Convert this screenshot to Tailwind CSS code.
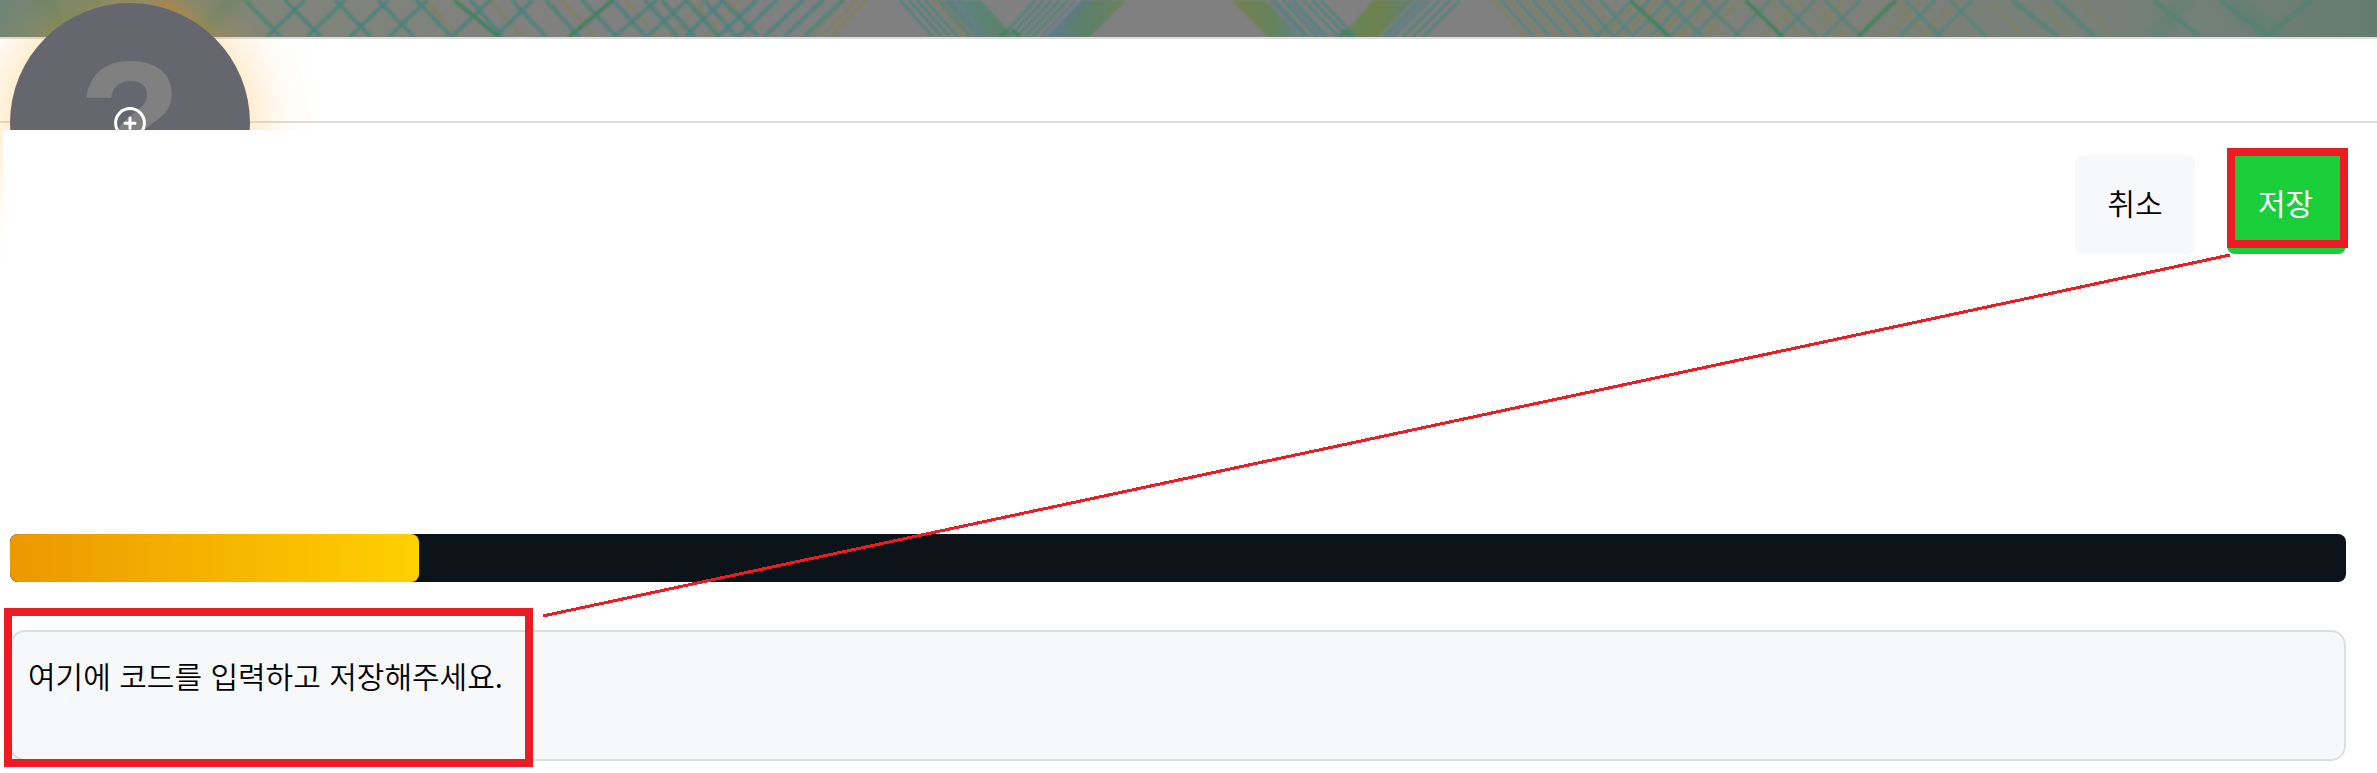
<!DOCTYPE html>
<html lang="ko">
<head>
<meta charset="utf-8">
<title>프로필 편집</title>
<script src="https://cdn.jsdelivr.net/npm/@tailwindcss/browser@4"></script>
</head>
<body class="bg-white">
<main class="relative flex h-[773px] w-[2377px] flex-col overflow-hidden bg-white font-['Noto_Sans_CJK_KR',sans-serif] text-[30px] text-black">
  <!-- Profile banner -->
  <header class="h-[39px] shrink-0 border-b-2 border-[#dedede] bg-[#808080]">
    <svg class="block h-[37px] w-full" viewBox="0 0 2377 37" fill="none">
      <defs>
        <filter id="soft" x="0" y="0" width="2377" height="37" filterUnits="userSpaceOnUse" color-interpolation-filters="sRGB"><feGaussianBlur stdDeviation="1.1"/></filter>
        <filter id="haze" x="-50" y="-50" width="2500" height="140" filterUnits="userSpaceOnUse" color-interpolation-filters="sRGB"><feGaussianBlur stdDeviation="7"/></filter>
        <linearGradient id="left"><stop stop-color="#6f8577"/><stop offset=".5" stop-color="#80857a"/><stop offset="1" stop-color="#808080"/></linearGradient>
        <linearGradient id="right"><stop stop-color="#808080"/><stop offset=".4" stop-color="#7d8078"/><stop offset=".8" stop-color="#74807a"/><stop offset="1" stop-color="#647c70"/></linearGradient>
        <linearGradient id="g1"><stop stop-color="#5c8387"/><stop offset="1" stop-color="#5d8262"/></linearGradient>
        <linearGradient id="g2"><stop stop-color="#5e7e89"/><stop offset=".5" stop-color="#5c8068"/><stop offset="1" stop-color="#6f8062"/></linearGradient>
        <linearGradient id="g3"><stop stop-color="#78804f"/><stop offset=".6" stop-color="#64825d"/><stop offset="1" stop-color="#648283"/></linearGradient>
        <linearGradient id="g4"><stop stop-color="#64855c"/><stop offset=".5" stop-color="#6d824f"/><stop offset="1" stop-color="#608078"/></linearGradient>
      </defs>
      <path d="M0 0h560v37H0z" fill="url(#left)"/>
      <path d="M1500 0h877v37h-877z" fill="url(#right)"/>
      <g filter="url(#haze)">
        <path d="M40 -5l35 47M95 -5l-45 47M235 -5l-42 47" stroke="#618365" stroke-width="10"/>
        <path d="M2190 -5l-40 47M2230 -5l50 47" stroke="#5b8073" stroke-width="9"/>
        <path d="M160 0l45 42" stroke="#a17d4d" stroke-width="14"/>
      </g>
      <g filter="url(#soft)">
        <!-- Broad ribbons -->
        <path d="M955 0h26l33 37h-28z" fill="url(#g1)"/>
        <path d="M1083 0h44l-37 37h-44z" fill="url(#g2)"/>
        <path d="M1231 0h34l36 37h-33z" fill="url(#g3)"/>
        <path d="M1373 0h42l-37 37h-36z" fill="url(#g4)"/>
        <!-- Woven threads -->
        <g stroke="#7f8064" stroke-width="3">
          <path d="M425 0l33 37M490 0l33 37M562 0l33 37M625 0l33 37M660 0l33 37M690 0l33 37M725 0l33 37"/>
          <path d="M857 0l-36 37M867 0l-36 37M845 0l-36 37M705 0l-36 37M740 0l-36 37"/>
          <path d="M933 0l33 37M942 0l33 37M1493 0l33 37M1509 0l33 37M1525 0l33 37M1541 0l33 37M1557 0l33 37M1573 0l33 37M1590 0l33 37"/>
          <path d="M1640 0l-36 37M1658 0l-36 37M1676 0l-36 37M1694 0l-36 37M1714 0l-36 37M1740 0l-36 37M1800 0l-36 37M1845 0l-36 37M1920 0l-36 37M1958 0l-36 37"/>
          <path d="M1690 0l33 37M1768 0l33 37M1812 0l33 37M1895 0l33 37M1990 0l33 37M2038 0l33 37M2080 0l33 37"/>
        </g>
        <g stroke="#46827c" stroke-opacity=".85" stroke-width="3.6">
          <path d="M245 0l36 37M285 0l36 37M335 0l36 37M378 0l36 37M416 0l36 37M470 0l33 37M512 0l34 37M546 0l33 37M582 0l35 37M613 0l33 37M645 0l33 37M662 0l33 37M686 0l33 37M704 0l33 37M722 0l37 37"/>
          <path d="M305 0l-38 37M345 0l-38 37M388 0l-38 37M427 0l-38 37M490 0l-38 37M533 0l-38 37M657 0l-43 37M687 0l-40 37M723 0l-38 37"/>
          <path d="M757 0l-39 37M777 0l-39 37M803 0l-39 37M823 0l-39 37M843 0l-39 37"/>
        </g>
        <g stroke="#4a8476" stroke-width="2.2">
          <path d="M900 0l33 37M909 0l33 37M917 0l33 37M925 0l33 37M938 0l33 37M948 0l33 37M1274 0l34 37M1283 0l34 37M1293 0l34 37M1303 0l36 37M1312 0l36 37M1320 0l36 37"/>
          <path d="M1036 0l-35 37M1044 0l-35 37M1052 0l-35 37M1060 0l-35 37M1068 0l-35 37M1420 0l-37 37M1430 0l-37 37M1440 0l-37 37M1450 0l-37 37M1460 0l-37 37"/>
        </g>
        <g stroke="#5c7891" stroke-width="2" stroke-opacity=".85"><path d="M952 0l33 37M944 0l33 37M1076 0l-35 37M1083 0l-35 37M1090 0l-35 37M1270 0l34 37M1288 0l34 37M1425 0l-37 37"/></g>
        <g stroke="#50837d" stroke-width="3.2" stroke-opacity=".78">
          <path d="M1501 0l33 37M1517 0l33 37M1533 0l33 37M1549 0l33 37M1565 0l33 37M1581 0l33 37M1600 0l33 37M1630 0l38 37M1665 0l38 37M1702 0l38 37M1780 0l36 37M1825 0l36 37M1905 0l36 37M1950 0l36 37"/>
          <path d="M1632 0l-36 37M1650 0l-36 37M1668 0l-36 37M1686 0l-36 37M1706 0l-36 37M1728 0l-36 37M1770 0l-36 37M1815 0l-36 37M1860 0l-36 37M1935 0l-36 37M1972 0l-36 37"/>
        </g>
        <path d="M454 0l45 37M613 0l-44 37M1630 0l40 37M1745 0l38 37M1896 0l-38 37M1008 30l-8 7M1012 30l8 7M1344 30l8 7M1346 30l-6 7" stroke="#42815e" stroke-width="3.6"/>
        <path d="M2012 0l46 37M2055 0l40 37M2153 0l47 37M2310 0l-42 37M2220 0l48 37" stroke="#538276" stroke-width="5" stroke-opacity=".75"/>
      </g>
    </svg>
  </header>

  <!-- Avatar strip, cut off by the editing panel below -->
  <section class="relative h-[91px] shrink-0">
    <div class="h-[84px] border-b-2 border-[#dedede]"></div>
    <div class="absolute top-[-36px] left-[10px] flex size-[240px] items-center justify-center rounded-full bg-[#66666e] shadow-[0_0_64px_rgba(255,165,20,0.44)]">
      <span class="relative -top-[3px] font-['Liberation_Sans',sans-serif] text-[164px] leading-none font-bold text-[#808080] [-webkit-text-stroke:2px_#808080]">?</span>
      <svg class="absolute top-[103px] left-[103px] size-[34px]" viewBox="0 0 34 34" fill="none" stroke="#fff" stroke-width="3" stroke-linecap="round">
        <circle cx="17" cy="17" r="14.4"/><path d="M17 12v10.4M12 17.2h10"/>
      </svg>
    </div>
  </section>

  <section class="relative ml-[3px] flex h-[643px] shrink-0 flex-col bg-white pr-[31px] pl-[7px]">
    <div class="mt-[25px] flex h-[99px] justify-end gap-8">
      <button class="w-[120px] rounded-lg bg-[#f6f8fa] pb-[5px] font-[350]">취소</button>
      <button class="w-[119px] rounded-lg bg-[#1ace3a] pr-[2px] pb-[5px] text-white">저장</button>
    </div>
    <div class="mt-[280px] h-12 shrink-0 overflow-hidden rounded-lg bg-[#0c141a]">
      <div class="h-full w-[409px] rounded-lg bg-linear-to-r from-[#eb9800] to-[#ffd000]"></div>
    </div>
    <div class="mt-12 h-[131px] shrink-0 rounded-[15px] border-2 border-[#dcdee0] bg-[#f6f8fa] px-4 pt-[21px] leading-[45px] font-[350]">여기에 코드를 입력하고 저장해주세요.</div>
  </section>

  <!-- Callouts -->
  <div class="absolute top-[148px] left-[2227px] h-[100px] w-[121px] border-8 border-[#ed1c24]"></div>
  <div class="absolute top-[608px] left-[4px] h-[159px] w-[529px] border-8 border-[#ed1c24]"></div>
  <svg class="absolute inset-0 h-[773px] w-[2377px]" viewBox="0 0 2377 773" shape-rendering="crispEdges"><path d="M543 616L2230 255" stroke="#ed1c24" stroke-width="3"/></svg>
</main>
</body>
</html>
